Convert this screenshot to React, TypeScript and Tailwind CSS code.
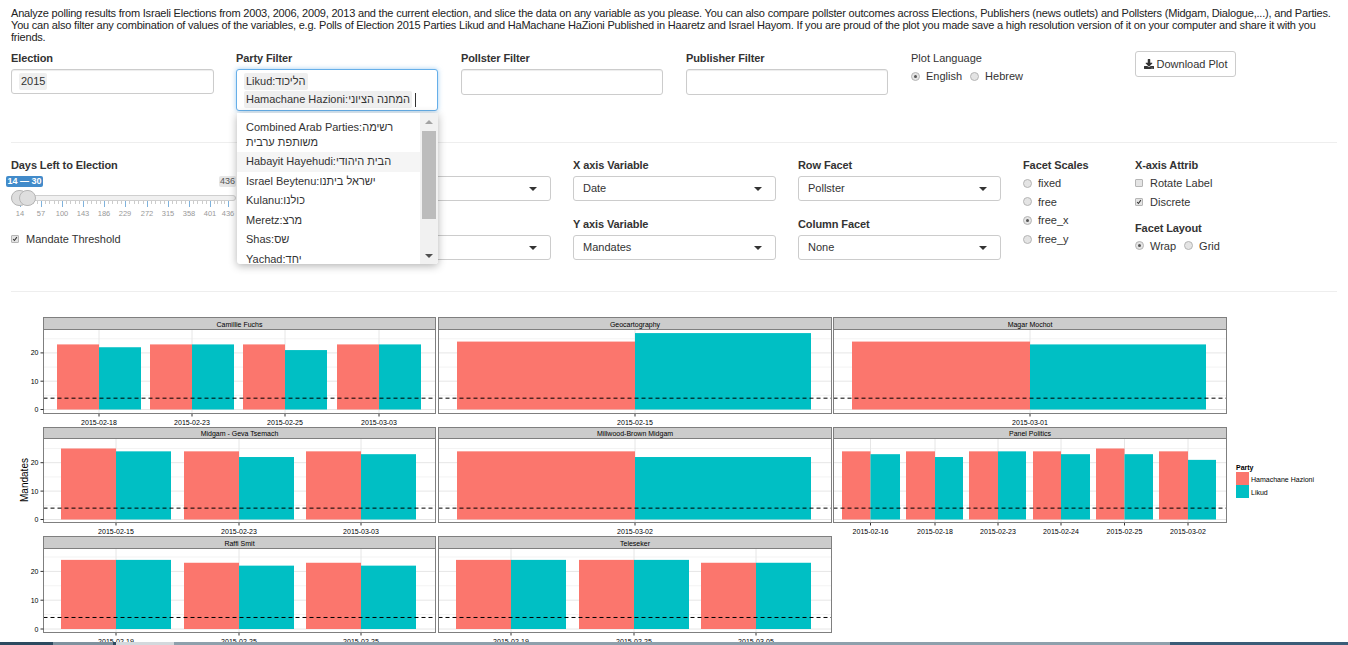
import React from 'react';
import { FaDownload } from 'react-icons/fa';

type Bar = { a: number; b: number; c: number; red: number; teal: number; label: string };

interface FacetProps {
  title: string;
  left: number;
  right: number;
  top: number;
  stripBottom: number;
  bottom: number;
  zero: number;
  unit: number;
  showY?: boolean;
  bars: Bar[];
}

const RED = '#fb766d';
const TEAL = '#00bfc4';

const bar = (a: number, b: number, c: number, red: number, teal: number, label: string): Bar => ({ a, b, c, red, teal, label });

const rowOne = { top: 317.5, stripBottom: 329.5, bottom: 413.5, zero: 409.5, unit: 2.83 };
const rowTwo = { top: 427.5, stripBottom: 438.5, bottom: 522.5, zero: 519.5, unit: 2.84 };
const rowThree = { top: 536.5, stripBottom: 548.5, bottom: 632.5, zero: 629, unit: 2.88 };
const colOne = { left: 43.5, right: 435.5 };
const colTwo = { left: 438.5, right: 831.5 };
const colThree = { left: 833.5, right: 1226.5 };

const facets: FacetProps[] = [
  {
    title: 'Camillie Fuchs', ...colOne, ...rowOne, showY: true,
    bars: [
      bar(57, 99, 141, 23, 22, '2015-02-18'),
      bar(150, 192, 234, 23, 23, '2015-02-23'),
      bar(243, 285, 327, 23, 21, '2015-02-25'),
      bar(337, 379, 421, 23, 23, '2015-03-03'),
    ],
  },
  { title: 'Geocartography', ...colTwo, ...rowOne, bars: [bar(457, 635, 811, 24, 27, '2015-02-15')] },
  { title: 'Magar Mochot', ...colThree, ...rowOne, bars: [bar(852, 1030, 1206, 24, 23, '2015-03-01')] },
  {
    title: 'Midgam - Geva Tsemach', ...colOne, ...rowTwo, showY: true,
    bars: [
      bar(61, 116, 171, 25, 24, '2015-02-15'),
      bar(184, 239, 294, 24, 22, '2015-02-23'),
      bar(306, 361, 416, 24, 23, '2015-03-03'),
    ],
  },
  { title: 'Millwood-Brown Midgam', ...colTwo, ...rowTwo, bars: [bar(457, 635, 811, 24, 22, '2015-03-02')] },
  {
    title: 'Panel Politics', ...colThree, ...rowTwo,
    bars: [
      bar(842, 870.5, 900, 24, 23, '2015-02-16'),
      bar(906, 935, 963, 24, 22, '2015-02-18'),
      bar(969, 998, 1026, 24, 24, '2015-02-23'),
      bar(1033, 1061, 1090, 24, 23, '2015-02-24'),
      bar(1096, 1124.5, 1153, 25, 23, '2015-02-25'),
      bar(1159, 1188, 1216, 24, 21, '2015-03-02'),
    ],
  },
  {
    title: 'Raffi Smit', ...colOne, ...rowThree, showY: true,
    bars: [
      bar(61, 116, 171, 24, 24, '2015-02-19'),
      bar(184, 239, 294, 23, 22, '2015-02-25'),
      bar(306, 361, 416, 23, 22, '2015-02-25'),
    ],
  },
  {
    title: 'Teleseker', ...colTwo, ...rowThree,
    bars: [
      bar(456, 511, 566, 24, 24, '2015-02-19'),
      bar(579, 634, 689, 24, 24, '2015-02-25'),
      bar(701, 756, 811, 23, 23, '2015-03-05'),
    ],
  },
];

const Facet: React.FC<FacetProps> = ({ title, left, right, top, stripBottom, bottom, zero, unit, showY, bars }) => {
  const yAt = (v: number) => zero - v * unit;
  return (
    <g>
      {[5, 15, 25].map((v) => (
        <line key={v} x1={left} x2={right} y1={yAt(v)} y2={yAt(v)} stroke="#f3f3f3" />
      ))}
      {[0, 10, 20].map((v) => (
        <line key={v} x1={left} x2={right} y1={yAt(v)} y2={yAt(v)} stroke="#e6e6e6" />
      ))}
      {bars.map((b) => (
        <line key={b.b} x1={b.b} x2={b.b} y1={stripBottom} y2={bottom} stroke="#e6e6e6" />
      ))}
      {bars.map((b) => (
        <g key={b.b}>
          <rect x={b.a} y={yAt(b.red)} width={b.b - b.a} height={b.red * unit} fill={RED} />
          <rect x={b.b} y={yAt(b.teal)} width={b.c - b.b} height={b.teal * unit} fill={TEAL} />
          <line x1={b.b} x2={b.b} y1={bottom} y2={bottom + 3} stroke="#333" />
          <text x={b.b} y={bottom + 11.5} textAnchor="middle" className="text-[7px]" fill="#000">
            {b.label}
          </text>
        </g>
      ))}
      <line x1={left} x2={right} y1={yAt(4)} y2={yAt(4)} stroke="#000" strokeDasharray="4 3" />
      <rect x={left} y={stripBottom} width={right - left} height={bottom - stripBottom} fill="none" stroke="#7f7f7f" />
      <rect x={left} y={top} width={right - left} height={stripBottom - top} fill="#cccccc" stroke="#7f7f7f" />
      <text x={(left + right) / 2} y={(top + stripBottom) / 2 + 3} textAnchor="middle" className="text-[7px]" fill="#000">
        {title}
      </text>
      {showY &&
        [0, 10, 20].map((v) => (
          <g key={v}>
            <line x1={left - 3} x2={left} y1={yAt(v)} y2={yAt(v)} stroke="#333" />
            <text x={left - 5} y={yAt(v) + 2.5} textAnchor="end" className="text-[7px]" fill="#000">
              {v}
            </text>
          </g>
        ))}
    </g>
  );
};

const Plot = () => (
  <svg viewBox="0 292 1348 350" className="block h-[350px] w-[1348px]">
    {facets.map((f) => (
      <Facet key={f.title} {...f} />
    ))}
    <text x={28} y={480} transform="rotate(-90 28 480)" textAnchor="middle" className="text-[10px]" fill="#000">
      Mandates
    </text>
    <text x={1236} y={470} className="text-[7px] font-bold" fill="#000">Party</text>
    <rect x={1236} y={472} width={13} height={13} fill={RED} />
    <rect x={1236} y={485} width={13} height={13} fill={TEAL} />
    <text x={1251} y={481.5} className="text-[7px]" fill="#000">Hamachane Hazioni</text>
    <text x={1251} y={494.5} className="text-[7px]" fill="#000">Likud</text>
  </svg>
);

const Label = ({ children }: { children: React.ReactNode }) => (
  <div className="mb-[4px] h-[14px] text-[11px] leading-[14px] font-bold tracking-[-0.1px] text-[#333]">{children}</div>
);

const TextBox = ({ size, children }: { size: string; children?: React.ReactNode }) => (
  <div className={`flex items-center rounded-[3px] border border-[#ccc] bg-white shadow-[inset_0_1px_1px_rgba(0,0,0,0.075)] pl-[7px] ${size}`}>
    {children}
  </div>
);

const Select = ({ value }: { value?: string }) => (
  <div className="mb-[16px] flex h-[25px] w-[203px] items-center justify-between rounded-[3px] border border-[#ccc] bg-white pl-[9px] pr-[13px] text-[11px] text-[#333]">
    <span>{value}</span>
    <span className="h-0 w-0 border-x-[4px] border-t-[4px] border-x-transparent border-t-[#333]" />
  </div>
);

const Radio = ({ on, label }: { on?: boolean; label: string }) => (
  <span className="flex items-center gap-[6px] text-[11px] leading-[14px] text-[#333]">
    <span className="flex h-[9px] w-[9px] items-center justify-center rounded-full border border-[#b5b5b5] bg-[#e4e4e4]">
      {on && <span className="h-[3px] w-[3px] rounded-full bg-[#555]" />}
    </span>
    {label}
  </span>
);

const Check = ({ on, label }: { on?: boolean; label: string }) => (
  <span className="flex items-center gap-[7px] text-[11px] leading-[14px] text-[#333]">
    <span className="flex h-[8px] w-[8px] items-center justify-center rounded-[1px] border border-[#b5b5b5] bg-[#e4e4e4]">
      {on && (
        <svg viewBox="0 0 8 8" className="h-[8px] w-[8px]">
          <path d="M1.5 4 L3.2 6 L6.5 1.5" fill="none" stroke="#333" strokeWidth="1.4" />
        </svg>
      )}
    </span>
    {label}
  </span>
);

const ticks = [20, 41, 62, 83, 104, 125, 147, 168, 189, 210, 228];
const tickLabels = ['14', '57', '100', '143', '186', '229', '272', '315', '358', '401', '436'];

const Slider = () => (
  <div className="w-[225px]">
    <div className="-ml-[5px] flex h-[11px] w-[230px] items-center justify-between">
      <span className="rounded-[2px] bg-[#428bca] px-[1.5px] text-[9px] leading-[11px] font-bold text-white">14 — 30</span>
      <span className="rounded-[2px] bg-[#e6e6e6] px-[1px] text-[9px] leading-[11px] text-[#555]">436</span>
    </div>
    <div className="relative mt-[8px] h-[6px] rounded-[3px] border border-[#cfcfcf] bg-[#f0f0f0]">
      <span className="absolute -left-[1px] -top-[6px] h-[16px] w-[17px] rounded-full border border-[#b5b5b5] bg-[#dedede]" />
      <span className="absolute left-[7px] -top-[6px] h-[16px] w-[17px] rounded-full border border-[#b5b5b5] bg-[#dedede]" />
    </div>
    <svg viewBox="11 201 225 20" className="block h-[20px] w-[225px]">
      {ticks.map((x, i) => (
        <g key={x}>
          <line x1={x + 0.5} x2={x + 0.5} y1={201} y2={207} stroke="#7fb2dc" />
          {i < ticks.length - 1 &&
            [1, 2, 3, 4].map((k) => {
              const mx = Math.round(x + ((ticks[i + 1] - x) * k) / 5) + 0.5;
              return <line key={k} x1={mx} x2={mx} y1={201} y2={204} stroke="#ccc" />;
            })}
          <text x={x} y={216} textAnchor="middle" className="text-[7.5px]" fill="#999">
            {tickLabels[i]}
          </text>
        </g>
      ))}
    </svg>
  </div>
);

const DropItem = ({ children, active }: { children: React.ReactNode; active?: boolean }) => (
  <div className={`h-[19.5px] whitespace-nowrap px-[9px] text-[11px] leading-[19.5px] text-[#333] ${active ? 'bg-[#f5f5f5]' : ''}`}>{children}</div>
);

const PartyFilter = () => (
  <div className="relative w-[202px]">
    <div className="flex h-[42px] flex-col items-start gap-px rounded-[3px] border border-[#66afe9] bg-white px-[7px] pt-[3px] shadow-[0_0_5px_rgba(102,175,233,0.6)]">
      <span className="h-[17px] whitespace-nowrap rounded-[2px] bg-[#efefef] px-[2px] text-[11px] leading-[17px] text-[#333]">Likud:הליכוד</span>
      <span className="flex items-center">
        <span className="h-[17px] whitespace-nowrap rounded-[2px] bg-[#efefef] px-[2px] text-[11px] leading-[17px] text-[#333]">Hamachane Hazioni:המחנה הציוני</span>
        <span className="ml-[3px] h-[14px] w-px bg-[#333]" />
      </span>
    </div>
    <div className="absolute left-px top-[44px] z-10 flex h-[151px] w-[201px] overflow-hidden rounded-b-[3px] bg-white shadow-[0_2px_8px_rgba(0,0,0,0.3)]">
      <div className="w-[183px] shrink-0 pt-[7px]">
        <div className="mb-[2px] px-[9px] text-[11px] leading-[15px] text-[#333]">Combined Arab Parties:רשימה משותפת ערבית</div>
        <DropItem active>Habayit Hayehudi:הבית היהודי</DropItem>
        <DropItem>Israel Beytenu:ישראל ביתנו</DropItem>
        <DropItem>Kulanu:כולנו</DropItem>
        <DropItem>Meretz:מרצ</DropItem>
        <DropItem>Shas:שס</DropItem>
        <DropItem>Yachad:יחד</DropItem>
      </div>
      <div className="flex w-[18px] flex-col items-center bg-[#f1f1f1]">
        <span className="mt-[7px] h-0 w-0 border-x-[4px] border-b-[4px] border-x-transparent border-b-[#a3a3a3]" />
        <span className="mt-[7px] h-[88px] w-[14px] bg-[#bcbcbc]" />
        <span className="mt-[35px] h-0 w-0 border-x-[4px] border-t-[4px] border-x-transparent border-t-[#505050]" />
      </div>
    </div>
  </div>
);

export default function App() {
  return (
    <div className="h-[645px] w-[1348px] overflow-hidden bg-white font-['Liberation_Sans',Arial,sans-serif]">
      <div className="px-[11px]">
        <p className="pt-[7px] text-[11px] leading-[12px] tracking-[-0.2px] text-[#222]">
          Analyze polling results from Israeli Elections from 2003, 2006, 2009, 2013 and the current election, and slice the data on any variable as you please. You can also compare pollster outcomes across Elections, Publishers (news outlets) and Pollsters (Midgam, Dialogue,...), and Parties. You can also filter any combination of values of the variables, e.g. Polls of Election 2015 Parties Likud and HaMachane HaZioni Published in Haaretz and Israel Hayom. If you are proud of the plot you made save a high resolution version of it on your computer and share it with you friends.
        </p>

        <div className="mt-[8px] flex h-[91px] items-start">
          <div className="w-[225px]">
            <Label>Election</Label>
            <TextBox size="h-[25px] w-[203px]">
              <span className="h-[17px] rounded-[2px] bg-[#efefef] px-[2px] text-[11px] leading-[17px] text-[#333]">2015</span>
            </TextBox>
          </div>
          <div className="w-[225px]">
            <Label>Party Filter</Label>
            <PartyFilter />
          </div>
          <div className="w-[225px]">
            <Label>Pollster Filter</Label>
            <TextBox size="h-[26px] w-[202px]" />
          </div>
          <div className="w-[225px]">
            <Label>Publisher Filter</Label>
            <TextBox size="h-[26px] w-[202px]" />
          </div>
          <div className="w-[224px]">
            <div className="mb-[4px] h-[14px] text-[11px] leading-[14px] text-[#333]">Plot Language</div>
            <div className="flex gap-[8px]">
              <Radio on label="English" />
              <Radio label="Hebrew" />
            </div>
          </div>
          <div className="flex h-[26px] w-[101px] items-center justify-center gap-[3px] rounded-[3px] border border-[#ccc] bg-white text-[11px] text-[#333]">
            <FaDownload className="h-[10px] w-[10px]" />
            Download Plot
          </div>
        </div>

        <div className="h-px bg-[#eee]" />

        <div className="flex h-[148px] items-start pt-[15px]">
          <div className="w-[337px]">
            <Label>Days Left to Election</Label>
            <Slider />
            <div className="mt-[11px]">
              <Check on label="Mandate Threshold" />
            </div>
          </div>
          <div className="w-[225px]">
            <div className="h-[18px]" />
            <Select />
            <div className="h-[18px]" />
            <Select />
          </div>
          <div className="w-[225px]">
            <Label>X axis Variable</Label>
            <Select value="Date" />
            <Label>Y axis Variable</Label>
            <Select value="Mandates" />
          </div>
          <div className="w-[225px]">
            <Label>Row Facet</Label>
            <Select value="Pollster" />
            <Label>Column Facet</Label>
            <Select value="None" />
          </div>
          <div className="w-[112px]">
            <Label>Facet Scales</Label>
            <div className="flex flex-col gap-[4.7px]">
              <Radio label="fixed" />
              <Radio label="free" />
              <Radio on label="free_x" />
              <Radio label="free_y" />
            </div>
          </div>
          <div>
            <Label>X-axis Attrib</Label>
            <div className="flex flex-col gap-[4.7px]">
              <Check label="Rotate Label" />
              <Check on label="Discrete" />
            </div>
            <div className="mt-[12px]">
              <Label>Facet Layout</Label>
              <div className="flex gap-[8px]">
                <Radio on label="Wrap" />
                <Radio label="Grid" />
              </div>
            </div>
          </div>
        </div>
      </div>

      <div className="mx-[11px] h-px w-[1326px] bg-[#eee]" />
      <Plot />

      <div className="flex h-[3px] bg-[#8ea0ac]">
        <div className="w-[53px] bg-[#2c4a60]" />
        <div className="w-[60px] bg-[#7f929f]" />
        <div className="w-[3px] bg-[#2c4a60]" />
        <div className="w-[58px] bg-[#d3d9dd]" />
        <div className="flex-1" />
        <div className="w-[178px] bg-[#3b5d78]" />
      </div>
    </div>
  );
}
